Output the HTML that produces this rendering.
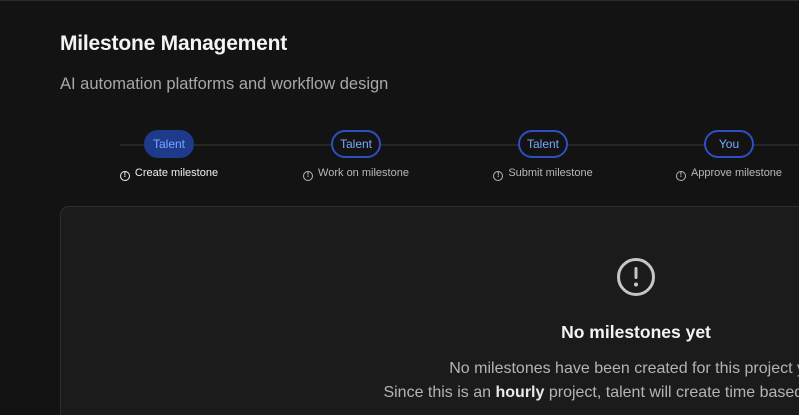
<!DOCTYPE html>
<html style="background:#131313"><head><meta charset="utf-8"><style>
html,body{margin:0;padding:0;width:799px;height:415px;overflow:hidden;background:#131313;font-family:"Liberation Sans",sans-serif;}
.wrap{position:absolute;left:0;top:0;width:799px;height:415px;overflow:hidden;background:#131313}
.top{position:absolute;left:0;top:0;width:799px;height:1px;background:#2c2c2c}
h1{position:absolute;left:60px;top:32px;margin:0;font-size:21px;font-weight:bold;color:#f4f4f4;letter-spacing:-0.2px}
.sub{position:absolute;left:60px;top:75px;font-size:16.5px;color:#a8a8a8}
.line{position:absolute;left:120px;top:144px;width:700px;height:2px;background:#262626}
.pill{position:absolute;top:130px;height:28px;width:50px;box-sizing:border-box;border-radius:14px;border:2px solid #2d4fc0;background:#131313;color:#78a9ff;font-size:12px;text-align:center;line-height:24px}
.pill.f{background:#1e3a8a;border-color:#1e3a8a}
.lab{position:absolute;top:167px;width:200px;text-align:center;font-size:11px;color:#b8b8b8}
.lab.f{color:#f0f0f0}
.ic{display:inline-block;width:8px;height:8px;border:1px solid currentColor;border-radius:50%;font-size:7px;line-height:8px;text-align:center;vertical-align:-1px;margin-right:5px;font-weight:bold}
.card{position:absolute;left:60px;top:206px;width:739px;height:209px;box-sizing:border-box;border:1px solid #2e2e2e;border-right:none;border-bottom:none;border-radius:9px 0 0 0;background:#1b1b1b}
.c{position:absolute;left:236px;width:800px;text-align:center;white-space:nowrap}
</style></head><body><div class="wrap">
<div class="top"></div>
<h1>Milestone Management</h1>
<div class="sub">AI automation platforms and workflow design</div>
<div class="line"></div>
<div class="pill f" style="left:144px">Talent</div>
<div class="pill" style="left:331px">Talent</div>
<div class="pill" style="left:518px">Talent</div>
<div class="pill" style="left:704px">You</div>
<div class="lab f" style="left:69px"><span class="ic">!</span>Create milestone</div>
<div class="lab" style="left:256px"><span class="ic">!</span>Work on milestone</div>
<div class="lab" style="left:443px"><span class="ic">!</span>Submit milestone</div>
<div class="lab" style="left:629px"><span class="ic">!</span>Approve milestone</div>
<div class="card"></div>
<svg style="position:absolute;left:616px;top:257px" width="40" height="40" viewBox="0 0 40 40"><circle cx="20" cy="20" r="17.5" fill="none" stroke="#c6c6c6" stroke-width="3"/><rect x="18.5" y="10" width="3" height="12" rx="1.5" fill="#c6c6c6"/><circle cx="20" cy="27.5" r="2" fill="#c6c6c6"/></svg>
<div class="c" style="top:322px;font-size:17.5px;font-weight:bold;color:#f4f4f4">No milestones yet</div>
<div class="c" style="top:360px;font-size:16px;color:#b4b4b4">No milestones have been created for this project yet.</div>
<div class="c" style="top:384px;font-size:16px;color:#b4b4b4">Since this is an <b style="color:#e8e8e8">hourly</b> project, talent will create time based milestones.</div>
</div></body></html>
